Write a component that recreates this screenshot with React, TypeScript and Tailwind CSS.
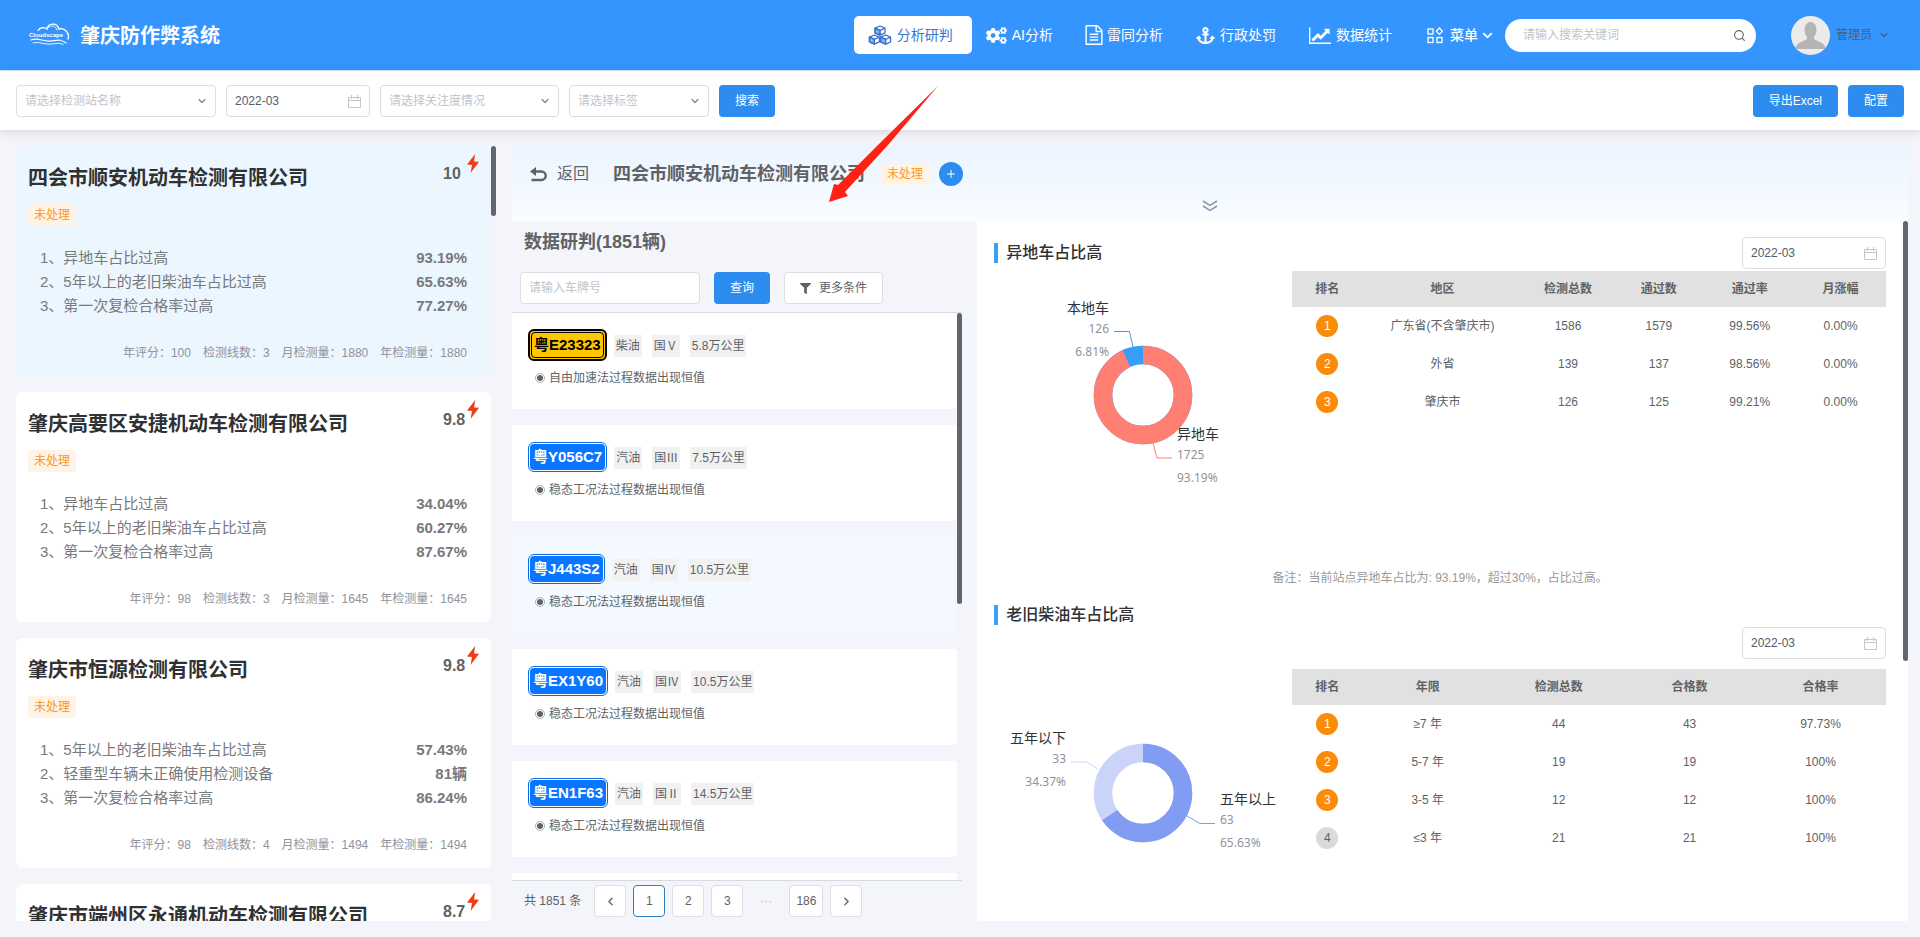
import React from "react";
import { FaAnchor, FaCogs, FaFilter } from "react-icons/fa";
import { ChevronDown, ChevronLeft, ChevronRight, Plus, Search } from "lucide-react";

type Station = {
  name: string;
  score: string;
  issues: { label: string; value: string }[];
  summary: string[];
};

const stations: Station[] = [
  {
    name: "四会市顺安机动车检测有限公司",
    score: "10",
    issues: [
      { label: "异地车占比过高", value: "93.19%" },
      { label: "5年以上的老旧柴油车占比过高", value: "65.63%" },
      { label: "第一次复检合格率过高", value: "77.27%" },
    ],
    summary: ["年评分：100", "检测线数：3", "月检测量：1880", "年检测量：1880"],
  },
  {
    name: "肇庆高要区安捷机动车检测有限公司",
    score: "9.8",
    issues: [
      { label: "异地车占比过高", value: "34.04%" },
      { label: "5年以上的老旧柴油车占比过高", value: "60.27%" },
      { label: "第一次复检合格率过高", value: "87.67%" },
    ],
    summary: ["年评分：98", "检测线数：3", "月检测量：1645", "年检测量：1645"],
  },
  {
    name: "肇庆市恒源检测有限公司",
    score: "9.8",
    issues: [
      { label: "5年以上的老旧柴油车占比过高", value: "57.43%" },
      { label: "轻重型车辆未正确使用检测设备", value: "81辆" },
      { label: "第一次复检合格率过高", value: "86.24%" },
    ],
    summary: ["年评分：98", "检测线数：4", "月检测量：1494", "年检测量：1494"],
  },
  {
    name: "肇庆市端州区永通机动车检测有限公司",
    score: "8.7",
    issues: [],
    summary: [],
  },
];

const vehicles = [
  { plate: "粤E23323", yellow: true, tags: ["柴油", "国Ⅴ", "5.8万公里"], note: "自由加速法过程数据出现恒值" },
  { plate: "粤Y056C7", tags: ["汽油", "国Ⅲ", "7.5万公里"], note: "稳态工况法过程数据出现恒值" },
  { plate: "粤J443S2", hover: true, tags: ["汽油", "国Ⅳ", "10.5万公里"], note: "稳态工况法过程数据出现恒值" },
  { plate: "粤EX1Y60", tags: ["汽油", "国Ⅳ", "10.5万公里"], note: "稳态工况法过程数据出现恒值" },
  { plate: "粤EN1F63", tags: ["汽油", "国Ⅱ", "14.5万公里"], note: "稳态工况法过程数据出现恒值" },
];

const regionHead = ["排名", "地区", "检测总数", "通过数", "通过率", "月涨幅"];
const regionRows = [
  ["广东省(不含肇庆市)", "1586", "1579", "99.56%", "0.00%"],
  ["外省", "139", "137", "98.56%", "0.00%"],
  ["肇庆市", "126", "125", "99.21%", "0.00%"],
];

const ageHead = ["排名", "年限", "检测总数", "合格数", "合格率"];
const ageRows = [
  ["≥7 年", "44", "43", "97.73%"],
  ["5-7 年", "19", "19", "100%"],
  ["3-5 年", "12", "12", "100%"],
  ["≤3 年", "21", "21", "100%"],
];

// Icons
const CubesIcon = () => (
  <svg width="24" height="20" viewBox="0 0 24 20" fill="none" stroke="currentColor" strokeWidth="1.3" strokeLinejoin="round">
    {[
      [12, 1],
      [6.4, 10],
      [17.6, 10],
    ].map(([x, y]) => (
      <g key={x} transform={`translate(${x} ${y})`}>
        <path d="M0 0 5 2.2V6.8L0 9.2-5 6.8V2.2Z" />
        <path d="M-5 2.2 0 4.4 5 2.2M0 4.4V9.2" />
        <path d="M-5 2.2 0 4.4V9.2L-5 6.8Z" fill="currentColor" fillOpacity="0.55" />
      </g>
    ))}
  </svg>
);

const FileIcon = () => (
  <svg width="20" height="20" viewBox="0 0 1792 1792" fill="currentColor" className="-mx-0.5">
    <path d="M1596 380q28 28 48 76t20 88v1152q0 40-28 68t-68 28h-1344q-40 0-68-28t-28-68v-1600q0-40 28-68t68-28h896q40 0 88 20t76 48zm-444-244v376h376q-10-29-22-41l-313-313q-12-12-41-22zm384 1528v-1024h-416q-40 0-68-28t-28-68v-416h-768v1536h1280zm-1024-864q0-14 9-23t23-9h704q14 0 23 9t9 23v64q0 14-9 23t-23 9h-704q-14 0-23-9t-9-23v-64zm736 224q14 0 23 9t9 23v64q0 14-9 23t-23 9h-704q-14 0-23-9t-9-23v-64q0-14 9-23t23-9h704zm0 256q14 0 23 9t9 23v64q0 14-9 23t-23 9h-704q-14 0-23-9t-9-23v-64q0-14 9-23t23-9h704z" />
  </svg>
);

const LineChartIcon = () => (
  <svg width="22" height="18" viewBox="0 0 2048 1664" fill="currentColor">
    <path d="M2048 1536v128h-2048v-1536h128v1408h1920zm-128-1248v435q0 21-19.5 29.5t-35.5-7.5l-121-121-633 633q-10 10-23 10t-23-10l-233-233-416 416-192-192 585-585q10-10 23-10t23 10l233 233 464-464-121-121q-16-16-7.5-35.5t29.5-19.5h435q14 0 23 9t9 23z" />
  </svg>
);

const MenuIcon = () => (
  <svg width="16" height="17" viewBox="0 0 16 17" fill="none" stroke="currentColor" strokeWidth="1.3">
    <rect x="1" y="2" width="5" height="5" />
    <rect x="1" y="10.5" width="5" height="5" />
    <rect x="10" y="10.5" width="5" height="5" />
    <path d="M12.4 1 15.4 4.2 12.4 7.4 9.4 4.2Z" />
  </svg>
);

const CalendarIcon = () => (
  <svg width="13" height="13" viewBox="0 0 13 13" fill="none" stroke="currentColor" className="shrink-0 text-[#c3c6cc]">
    <path d="M.5 2.5h12v10H.5ZM.5 5.5h12M3.5 0v4M9.5 0v4" />
  </svg>
);

const BoltIcon = () => (
  <svg width="12" height="19" viewBox="0 0 12 19" fill="#f03c14">
    <path d="M8.2 0 0 10.6 5 11 3.6 19 12 7.8 7 7.4Z" />
  </svg>
);

const BackIcon = () => (
  <svg width="17" height="15" viewBox="0 0 17 15" fill="none">
    <path d="M4 4.5h7.5a4 4 0 0 1 0 8.5H1.5" stroke="currentColor" strokeWidth="2.4" />
    <path d="M0 4.5 6 0v9Z" fill="currentColor" />
  </svg>
);

const ExpandIcon = () => (
  <svg width="16" height="12" viewBox="0 0 16 12" fill="none" stroke="currentColor" strokeWidth="1.5">
    <path d="M1 1 8 5.4 15 1M1 6 8 10.4 15 6" />
  </svg>
);

const Logo = () => (
  <svg width="42" height="24" viewBox="0 0 42 24" fill="none" stroke="white" strokeLinecap="round">
    <path d="M10 7.5C12 4 16 4 19 6 20 0 29-1 31 6 37 4 42 11 40 16" strokeWidth="1.4" />
    <path d="M20 5C23 1 28 3 29 7" strokeWidth="0.9" />
    <path d="M3 17C10 14 15 19 23 18S32 16 38 20" strokeWidth="1.2" />
    <path d="M5 20C11 18 16 22 24 21S31 20 35 21.500" strokeWidth="0.9" />
    <text x="1" y="13.500" fill="white" stroke="none" fontSize="6" fontWeight="bold">Cloudscape</text>
  </svg>
);

const navItems = [
  { label: "分析研判", icon: <CubesIcon />, active: true },
  { label: "AI分析", icon: <FaCogs size={21} /> },
  { label: "雷同分析", icon: <FileIcon /> },
  { label: "行政处罚", icon: <FaAnchor size={19} /> },
  { label: "数据统计", icon: <LineChartIcon /> },
];

const PrimaryButton = ({ children }: { children: React.ReactNode }) => (
  <button className="h-8 rounded bg-[#2d8cf0] px-4 text-xs text-white">{children}</button>
);

const StatusTag = () => (
  <span className="inline-block rounded-sm bg-[#fff3e6] px-1.5 text-xs leading-[22px] text-[#f59a23]">未处理</span>
);

const FilterSelect = ({ placeholder, width }: { placeholder: string; width: string }) => (
  <div className={`relative ${width}`}>
    <select
      aria-label={placeholder}
      className="h-8 w-full appearance-none rounded border border-[#dcdee2] bg-white px-2 text-xs text-[#c0c4cc]"
    >
      <option>{placeholder}</option>
    </select>
    <ChevronDown size={12} strokeWidth={2.5} className="pointer-events-none absolute top-2.5 right-2 text-[#808695]" />
  </div>
);

const MonthPicker = () => (
  <div className="flex h-8 w-36 items-center rounded border border-[#dcdee2] bg-white px-2">
    <input aria-label="月份" defaultValue="2022-03" className="w-full min-w-0 text-xs text-[#515a6e] outline-none" />
    <CalendarIcon />
  </div>
);

const StationCard = ({ station, active }: { station: Station; active: boolean }) => (
  <article className={`h-[230px] shrink-0 rounded-md px-3 pt-2 ${active ? "bg-[#ebf6ff]" : "bg-white"}`}>
    <div className="flex items-start">
      <h2 className="mt-2.5 flex-1 text-xl leading-7 font-bold whitespace-nowrap text-[#303133]">{station.name}</h2>
      <span className="mt-2.5 w-6 text-base leading-5 font-bold text-[#606266]">{station.score}</span>
      <BoltIcon />
    </div>
    {station.issues.length > 0 && (
      <>
        <div className="mt-2.5">
          <StatusTag />
        </div>
        <ol className="mt-5 px-3 text-[15px] leading-6 text-[#77797d]">
          {station.issues.map((issue, i) => (
            <li key={issue.label} className="flex justify-between">
              <span>
                {i + 1}、{issue.label}
              </span>
              <b>{issue.value}</b>
            </li>
          ))}
        </ol>
        <div className="mt-[26px] flex justify-end gap-3 px-3 text-xs leading-[18px] text-[#909399]">
          {station.summary.map((text) => (
            <span key={text}>{text}</span>
          ))}
        </div>
      </>
    )}
  </article>
);

const Plate = ({ text, yellow }: { text: string; yellow?: boolean }) =>
  yellow ? (
    <span className="rounded-md border-2 border-black bg-[#ffc600] p-px">
      <b className="block rounded border border-black px-0.5 text-[15px] leading-6 text-black">{text}</b>
    </span>
  ) : (
    <span className="rounded-md border border-[#0a6be0] bg-white p-px">
      <b className="block rounded bg-[#0a75ff] px-[3px] text-[15px] leading-[26px] text-white">{text}</b>
    </span>
  );

const RankTable = ({ head, rows, wide }: { head: string[]; rows: string[][]; wide?: boolean }) => (
  <table className="w-full table-fixed self-start text-center text-xs text-[#606266]">
    <thead>
      <tr className="h-9 bg-[#e1e1e1]">
        {head.map((name, i) => (
          <th key={name} className={i === 0 ? "w-[70px]" : i === 1 && wide ? "w-[27%]" : ""}>
            {name}
          </th>
        ))}
      </tr>
    </thead>
    <tbody>
      {rows.map((row, i) => (
        <tr key={row[0]} className="h-[38px]">
          <td>
            <span
              className={`mx-auto block size-[22px] rounded-full leading-[22px] ${
                i < 3 ? "bg-[#fa8c0a] text-white" : "bg-[#dadada]"
              }`}
            >
              {i + 1}
            </span>
          </td>
          {row.map((cell, j) => (
            <td key={j}>{cell}</td>
          ))}
        </tr>
      ))}
    </tbody>
  </table>
);

type Slice = { name: string; count: string; percent: string; x: number; y: number; line: string; color: string };

// Donut with the first slice clockwise from the top and the second one filling the rest
const Donut = ({ share, slices }: { share: number; slices: [Slice, Slice] }) => (
  <svg width="298" height="250" viewBox="0 0 298 250" className="font-['Noto_Sans','Noto_Sans_CJK_SC',sans-serif]">
    <circle cx="149" cy="124" r="40" fill="none" stroke={slices[1].color} strokeWidth="18.5" />
    <circle
      cx="149"
      cy="124"
      r="40"
      fill="none"
      stroke={slices[0].color}
      strokeWidth="18.5"
      pathLength="100"
      strokeDasharray={`${share} ${100 - share}`}
      transform="rotate(-90 149 124)"
    />
    {slices.map((s, i) => (
      <g key={s.name} textAnchor={i === 0 ? "start" : "end"} fill="#909399" fontSize="12">
        <path d={s.line} fill="none" stroke={s.color} />
        <text x={s.x} y={s.y} fill="#303133" fontSize="14">
          {s.name}
        </text>
        <text x={s.x} y={s.y + 20}>
          {s.count}
        </text>
        <text x={s.x} y={s.y + 43}>
          {s.percent}
        </text>
      </g>
    ))}
  </svg>
);

const SectionTitle = ({ children }: { children: React.ReactNode }) => (
  <h3 className="border-l-4 border-[#3a9ff5] pl-2 text-base leading-5 font-medium text-[#303133]">{children}</h3>
);

const pageButton = "h-8 min-w-8 rounded border bg-white px-1.5 text-[#606266]";

const App: React.FC = () => {
  return (
    <div className="relative flex h-screen flex-col overflow-hidden bg-[#f3f5fa] font-['Liberation_Sans','Noto_Sans_CJK_SC',sans-serif]">
      {/* Header */}
      <header className="flex h-[71px] shrink-0 items-center border-b border-[#d5e6fb] bg-[#3595ff] pr-[30px] pl-7 text-white">
        <Logo />
        <h1 className="mt-0.5 ml-2.5 text-xl font-bold">肇庆防作弊系统</h1>
        <nav className="ml-auto flex items-center text-sm">
          {navItems.map((item) => (
            <a
              key={item.label}
              href="#"
              className={`flex h-[38px] items-center gap-[5px] rounded-[5px] pr-[19px] pl-3.5 ${
                item.active ? "bg-white text-[#3a76cf]" : ""
              }`}
            >
              {item.icon}
              {item.label}
            </a>
          ))}
          <button className="flex items-center pl-4 font-medium">
            <MenuIcon />
            <span className="ml-[7px]">菜单</span>
            <ChevronDown size={15} strokeWidth={3} className="ml-0.5" />
          </button>
        </nav>
        <div className="ml-2.5 flex h-[33px] w-[251px] items-center rounded-full bg-white pr-2.5 pl-[18px]">
          <input
            aria-label="搜索"
            placeholder="请输入搜索关键词"
            className="w-full min-w-0 text-xs text-[#515a6e] outline-none placeholder:text-[#c0c4cc]"
          />
          <Search size={13} className="shrink-0 text-[#606266]" />
        </div>
        <button className="ml-[35px] flex items-center gap-1.5 text-xs text-[#4a5d7c]">
          <svg width="39" height="39" viewBox="0 0 39 39">
            <defs>
              <clipPath id="avatar">
                <circle cx="19.5" cy="19.5" r="19.5" />
              </clipPath>
            </defs>
            <circle cx="19.5" cy="19.5" r="19.5" fill="#ebebeb" />
            <g clipPath="url(#avatar)" fill="#b4b4b4">
              <ellipse cx="19.5" cy="14" rx="6" ry="8" />
              <path d="M16 19h7v4c2 2 11 3 12 10H4c1-7 10-8 12-10Z" />
            </g>
          </svg>
          管理员
          <ChevronDown size={12} strokeWidth={2.5} />
        </button>
      </header>

      {/* Filters */}
      <div className="relative flex shrink-0 gap-2.5 bg-white px-4 pt-3.5 pb-[13px] shadow-[0_2px_10px_rgba(0,0,0,0.12)]">
        <FilterSelect placeholder="请选择检测站名称" width="w-[200px]" />
        <MonthPicker />
        <FilterSelect placeholder="请选择关注度情况" width="w-[179px]" />
        <FilterSelect placeholder="请选择标签" width="w-[140px]" />
        <PrimaryButton>搜索</PrimaryButton>
        <div className="ml-auto flex gap-2.5">
          <PrimaryButton>导出Excel</PrimaryButton>
          <PrimaryButton>配置</PrimaryButton>
        </div>
      </div>

      <main className="flex min-h-0 flex-1 gap-4 py-4 pr-3 pl-4">
        {/* Stations */}
        <aside className="relative flex w-1/4 min-w-[480px] shrink-0 flex-col gap-4 overflow-hidden pr-[5px]">
          {stations.map((station, i) => (
            <StationCard key={station.name} station={station} active={i === 0} />
          ))}
          <div className="absolute top-0 right-0 h-[70px] w-[5px] rounded-full bg-[#60656f]" />
        </aside>

        <div className="flex min-w-0 flex-1 flex-col">
          <div className="h-[75px] shrink-0 bg-gradient-to-b from-[#ebf4ff] to-[#f8fdff] pt-4">
            <div className="flex h-6 items-center pl-[18px] text-[#606266]">
              <button className="flex items-center gap-2.5 text-base">
                <BackIcon />
                返回
              </button>
              <h2 className="mr-4 ml-6 text-lg font-bold">四会市顺安机动车检测有限公司</h2>
              <StatusTag />
              <button aria-label="添加" className="ml-2.5 flex size-6 items-center justify-center rounded-full bg-[#2d8cf0] text-white">
                <Plus size={12} />
              </button>
            </div>
            <button aria-label="展开" className="mx-auto mt-3.5 block text-[#8d95a3]">
              <ExpandIcon />
            </button>
          </div>

          <div className="flex min-h-0 flex-1">
            {/* Vehicles */}
            <section className="flex w-1/3 flex-col pr-[15px]">
              <h3 className="mt-[9px] pl-3 text-lg leading-6 font-bold text-[#606266]">数据研判(1851辆)</h3>
              <div className="mt-[18px] flex gap-3.5 pl-2 text-xs">
                <input
                  aria-label="车牌号"
                  placeholder="请输入车牌号"
                  className="h-8 w-[180px] rounded border border-[#dcdee2] bg-white px-2 outline-none placeholder:text-[#c0c4cc]"
                />
                <PrimaryButton>查询</PrimaryButton>
                <button className="flex h-8 items-center gap-2 rounded border border-[#dcdee2] bg-white px-[15px] text-[#606266]">
                  <FaFilter size={11} />
                  更多条件
                </button>
              </div>
              <div className="relative mt-2 flex min-h-0 flex-1 flex-col gap-4 overflow-hidden border-y border-[#d7dade] pr-[5px]">
                {vehicles.map((v) => (
                  <article key={v.plate} className={`h-24 shrink-0 rounded-r px-4 pt-4 ${v.hover ? "bg-[#f3f9ff]" : "bg-white"}`}>
                    <div className="flex h-8 items-center">
                      <Plate text={v.plate} yellow={v.yellow} />
                      <div className="mt-0.5 ml-[7px] flex gap-2.5 text-xs leading-[22px] text-[#606266]">
                        {v.tags.map((tag) => (
                          <span key={tag} className="bg-[#f1f1f1] px-0.5">
                            {tag}
                          </span>
                        ))}
                      </div>
                    </div>
                    <p className="mt-2 flex items-center gap-1 pl-[7px] text-xs leading-[18px] text-[#606266]">
                      <span className="flex size-2.5 items-center justify-center rounded-full border border-[#b0b0b0]">
                        <span className="size-1.5 rounded-full bg-[#606266]" />
                      </span>
                      {v.note}
                    </p>
                  </article>
                ))}
                <div className="h-24 shrink-0 bg-white" />
                <div className="absolute top-0 right-0 h-[291px] w-[5px] rounded-full bg-[#60656f]" />
              </div>
              <div className="flex items-center gap-[7px] py-1 pl-3 text-xs text-[#606266]">
                <span className="mr-1.5">共 1851 条</span>
                <button aria-label="上一页" className={`${pageButton} flex items-center justify-center border-[#dcdee2]`}>
                  <ChevronLeft size={13} strokeWidth={2.5} />
                </button>
                <button className={`${pageButton} border-[#2d7fc0]`}>1</button>
                <button className={`${pageButton} border-[#dcdee2]`}>2</button>
                <button className={`${pageButton} border-[#dcdee2]`}>3</button>
                <span className="w-8 text-center text-[#c0c4cc]">···</span>
                <button className={`${pageButton} border-[#dcdee2]`}>186</button>
                <button aria-label="下一页" className={`${pageButton} flex items-center justify-center border-[#dcdee2]`}>
                  <ChevronRight size={13} strokeWidth={2.5} />
                </button>
              </div>
            </section>

            {/* Charts and rankings */}
            <section className="relative min-w-0 flex-1 overflow-hidden bg-white pt-4 pr-[22px] pl-[17px]">
              <div className="flex items-center justify-between">
                <SectionTitle>异地车占比高</SectionTitle>
                <MonthPicker />
              </div>
              <div className="mt-0.5 grid min-h-[298px] grid-cols-[1fr_2fr]">
                <Donut
                  share={93.19}
                  slices={[
                    { name: "异地车", count: "1725", percent: "93.19%", x: 183, y: 168, line: "M159 172 163 187H178", color: "#ff8073" },
                    { name: "本地车", count: "126", percent: "6.81%", x: 115, y: 42, line: "M120 60.5H135.5L139 76", color: "#379df8" },
                  ]}
                />
                <RankTable head={regionHead} rows={regionRows} wide />
              </div>
              <p className="text-center text-xs leading-[18px] text-[#999]">
                备注：当前站点异地车占比为: 93.19%，超过30%，占比过高。
              </p>

              <div className="mt-[18px]">
                <SectionTitle>老旧柴油车占比高</SectionTitle>
              </div>
              <div className="mt-0.5 flex justify-end">
                <MonthPicker />
              </div>
              <div className="mt-2.5 grid grid-cols-[1fr_2fr]">
                <Donut
                  share={65.63}
                  slices={[
                    { name: "五年以上", count: "63", percent: "65.63%", x: 226, y: 135, line: "M193 147 206 154.5H221", color: "#829bf3" },
                    { name: "五年以下", count: "33", percent: "34.37%", x: 72, y: 74, line: "M77 93H93L104 100", color: "#cad4f9" },
                  ]}
                />
                <RankTable head={ageHead} rows={ageRows} />
              </div>
              <div className="absolute top-0 right-0 h-[440px] w-[5px] rounded-full bg-[#60656f]" />
            </section>
          </div>
        </div>
      </main>

      {/* Red pointer over the company name */}
      <svg className="pointer-events-none absolute top-[86px] left-[828px]" width="112" height="118" viewBox="0 0 112 118" fill="#ff2113">
        <path d="M110 0 54 55 10 99 6 98 1 116 20 110 17 106 60 59Z" />
      </svg>
    </div>
  );
};

export default App;
